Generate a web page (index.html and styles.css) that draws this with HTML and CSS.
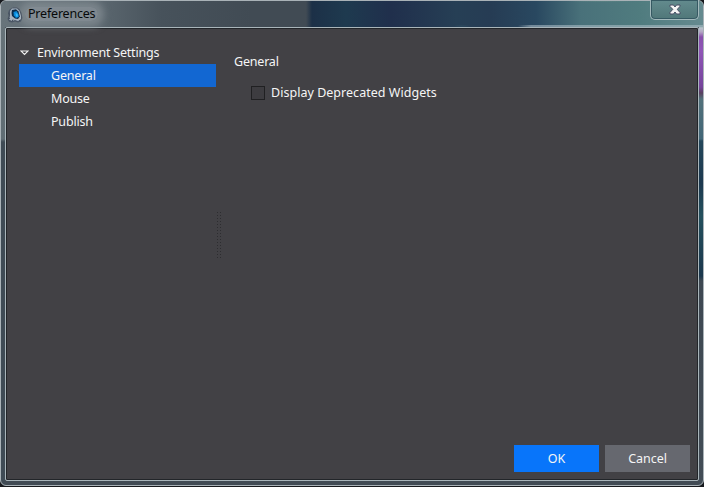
FILE: index.html
```html
<!DOCTYPE html>
<html lang="en">
<head>
<meta charset="utf-8">
<title>Preferences</title>
<link rel="stylesheet" href="styles.css">
</head>
<body>
<div class="window">
  <header class="titlebar">
    <svg class="app-icon" width="16" height="16" viewBox="0 0 16 16">
      <path d="M4 1.5L6 .5H10L12.5 2L14.5 6L15.4 11L14 14.5L11 15.5L8 14.5L5 15.4L2 14.7L.5 12L1.5 9L1 6L2 3Z" fill="#4c5766"/>
      <path d="M3 4L5 1.5L10 1.5L12.5 4L14 9L14 12.5L11 14L8 13L5 14L2 12.5L3 9Z" fill="#a7b3bf"/>
      <path d="M5 3L9 2.2L11.5 4.5L12.8 9.5L11 12L8 11.5L5 9L4.5 6Z" fill="#0a2c4c"/>
      <path d="M6.5 5L9.5 4L11.5 7L11.8 10L9 11L6.8 8.5Z" fill="#0788d8"/>
      <path d="M8.5 6L10.5 7L11 9.5L9 9.5Z" fill="#35baff"/>
      <path d="M1.5 6.5L3 7.5M1 11L3 11.5M5 14.5L6 12.5M12 14L13.5 12.5" fill="none" stroke="#465160"/>
    </svg>
    <span class="title">Preferences</span>
    <button class="close" aria-label="Close">
      <svg width="12" height="11" viewBox="0 0 12 11"><path d="M1 1H4.5L6 3L7.5 1H11V2.5L8.2 5.3L11 8.5V10H7.5L6 8L4.5 10H1V8.5L3.8 5.3L1 2.5Z" fill="#f4f4f4" stroke="#484d65"/></svg>
    </button>
  </header>
  <main class="client">
    <nav class="tree">
      <div class="group"><svg width="9" height="6" viewBox="0 0 9 6"><path d="M1 1H8L4.5 4.5Z" fill="#39383c" stroke="#f2f2f2" stroke-width="1.1"/></svg><span class="env">Environment Settings</span></div>
      <div class="item selected">General</div>
      <div class="item">Mouse</div>
      <div class="item">Publish</div>
    </nav>
    <div class="splitter"></div>
    <section class="page">
      <h1>General</h1>
      <label class="option"><span class="box"></span><span class="option-text">Display Deprecated Widgets</span></label>
    </section>
    <footer class="actions"><button class="ok">OK</button><button>Cancel</button></footer>
  </main>
</div>
</body>
</html>
```
FILE: styles.css
```css
* { box-sizing: border-box; }
body {
  margin: 0;
  background: #17191d;
  font: 12.5px/23px "Noto Sans", "Open Sans", sans-serif;
  letter-spacing: -.2px;
  color: #f5f5f5;
}
.window {
  height: 486px;
  padding: 0 4px 4px;
  border: 1px solid #a9b2b7;
  border-radius: 6px;
  background:
    linear-gradient(#668c8e 0 24px, #b8c4cb 27px, #b4a5c4 31px, #8850ac 36px, #8f55b6 50px, #75449b 86px, #59405f 92px, #52717b 98px, #426677 138px, #24475b 140px, #1c384f 182px, #24505d 215px, #1b374d 275px, #3e4852 280px, #424c56) right / 4px 100% no-repeat,
    linear-gradient(#68747a 0, #606d74 138px, #3f4b55 141px, #3f4b55) left / 4px 100% no-repeat,
    #414b54;
}
.titlebar {
  position: relative;
  display: flex;
  align-items: flex-start;
  height: 26px;
  margin: 0 -4px;
  padding: 5px 4px 0 6px;
  border-radius: 5px 5px 0 0;
  background:
    linear-gradient(90deg, transparent 517px, #b6c6cf88 530px, #b0c1ca88) bottom / 100% 2px no-repeat,
    radial-gradient(ellipse at 350px 9px, #31516988, transparent 9px),
    radial-gradient(ellipse at 425px 19px, #31506888, transparent 9px),
    radial-gradient(ellipse at 461px 25px, #41738488, transparent 12px),
    radial-gradient(ellipse at 600px 0, #6e938b77, transparent 35px),
    linear-gradient(90deg, #68747b 0, #5b676f 100px, #47525b 160px, #414b54 250px, #414b54 305px, #1c3047 311px, #1e3a4f 345px, #202f4c 390px, #263f55 455px, #263c54 490px, #294860 535px, #49717a 580px, #507c7f 640px, #668b90 703px);
}
.app-icon { z-index: 1; margin-top: 1px; }
.title {
  position: relative;
  z-index: 0;
  margin: -4px 0 0 5px;
  color: #07090a;
}
.title::before {
  content: "";
  position: absolute;
  z-index: -1;
  inset: 5px -3px 4px -3px;
  border-radius: 9px;
  background: #9199a0aa;
  box-shadow: 0 0 7px 6px #899198aa;
}
.close {
  position: absolute;
  top: -1px;
  right: 4px;
  width: 49px;
  height: 20px;
  padding: 2px 0;
  border: 1px solid #a3b9bc;
  border-top: 0;
  border-radius: 0 0 5px 5px;
  background: linear-gradient(#638b8e, #507779);
  box-shadow: inset 0 0 0 1px #365963;
}
.close svg { display: block; margin: 0 auto; }
.client {
  height: 454px;
  display: grid;
  grid-template: 1fr 27px / 210px 5px 1fr;
  border: 1px solid #a9b5ba;
  border-radius: 2px;
  padding: 13px 8px 8px 13px;
  background: #424145;
  box-shadow: inset 0 0 0 1px #222529;
}
.tree { grid-area: 1 / 1; width: 197px; }
.group { display: flex; align-items: center; height: 23px; }
.group svg { margin: 0 8px 0 1px; }
.item { height: 23px; padding-left: 32px; }
.selected { background: #1267d2; }
.splitter {
  grid-area: 1 / 2;
  width: 4px;
  height: 46px;
  margin: 171px 0 0 -12px;
  background: radial-gradient(circle at .5px .5px, #2d2d30 .6px, transparent .8px) 0 0 / 3px 3px;
}
.page { grid-area: 1 / 3; padding-top: 9px; }
h1 { margin: 0; font: inherit; }
.option { display: flex; align-items: center; margin: 8px 0 0 17px; }
.option-text { letter-spacing: .03px; }
.box { width: 14px; height: 14px; margin-right: 6px; border: 1px solid #202022; background: #3d3c40; }
.actions { grid-column: 1 / 4; display: flex; justify-content: flex-end; gap: 6px; }
.actions button {
  width: 85px;
  height: 27px;
  padding: 0;
  border: 0;
  background: #66686f;
  color: #f5f5f5;
  font: inherit;
  letter-spacing: -.05px;
}
.actions .ok { background: #0875fa; }
```
